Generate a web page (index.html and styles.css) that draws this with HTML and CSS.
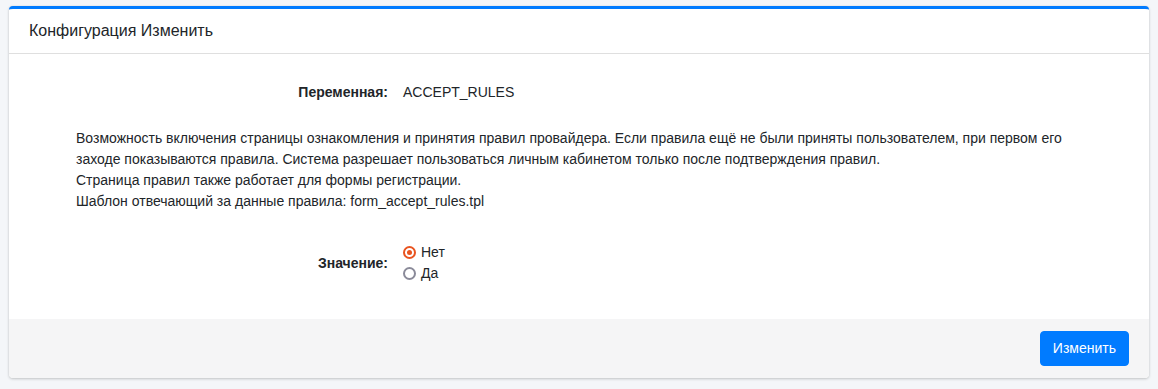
FILE: index.html
```html
<!DOCTYPE html>
<html lang="ru">
<head>
<meta charset="utf-8">
<title>Конфигурация Изменить</title>
<link rel="stylesheet" href="styles.css">
</head>
<body>
<div class="card">
  <div class="card-header">
    <h3 class="card-title">Конфигурация Изменить</h3>
  </div>
  <div class="card-body">
    <div class="form-row var-row">
      <div class="label">Переменная:</div>
      <div class="value">ACCEPT_RULES</div>
    </div>
    <div class="description">
      Возможность включения страницы ознакомления и принятия правил провайдера. Если правила ещё не были приняты пользователем, при первом его заходе показываются правила. Система разрешает пользоваться личным кабинетом только после подтверждения правил.<br>
      Страница правил также работает для формы регистрации.<br>
      Шаблон отвечающий за данные правила: form_accept_rules.tpl
    </div>
    <div class="form-row value-row">
      <div class="label">Значение:</div>
      <div class="radios">
        <label class="radio"><span class="dot checked"></span>Нет</label>
        <label class="radio"><span class="dot"></span>Да</label>
      </div>
    </div>
  </div>
  <div class="card-footer">
    <button class="btn">Изменить</button>
  </div>
</div>
</body>
</html>
```

FILE: styles.css
```css
html, body {
  margin: 0;
  padding: 0;
}
body {
  background: #f4f6f9;
  font-family: "Liberation Sans", Arial, sans-serif;
  font-size: 14px;
  line-height: 21px;
  color: #212529;
  padding: 6px 9px;
}
.card {
  width: 1140px;
  background: #fff;
  border-top: 3px solid #007bff;
  border-radius: 4px;
  box-shadow: 0 0 1px rgba(0,0,0,.125), 0 1px 3px rgba(0,0,0,.2);
  overflow: hidden;
}
.card-header {
  padding: 12px 20px;
  border-bottom: 1px solid #dfdfdf;
}
.card-title {
  margin: 0;
  font-size: 16px;
  line-height: 20px;
  font-weight: 400;
}
.card-body {
  padding: 28px 20px 35px;
}
.form-row {
  display: flex;
  gap: 15px;
}
.label {
  width: 359px;
  text-align: right;
  font-weight: 700;
  flex-shrink: 0;
}
.value-row {
  margin-top: 30px;
  align-items: center;
}
.description {
  margin-top: 25px;
  padding-left: 47px;
  padding-right: 20px;
}
.radios {
  display: flex;
  flex-direction: column;
}
.radio {
  display: flex;
  align-items: center;
  gap: 5px;
}
.dot {
  width: 13px;
  height: 13px;
  box-sizing: border-box;
  border: 2px solid #8a8a99;
  border-radius: 50%;
  position: relative;
}
.dot.checked {
  border-color: #e95420;
}
.dot.checked::after {
  content: "";
  position: absolute;
  left: 2px;
  top: 2px;
  width: 5px;
  height: 5px;
  border-radius: 50%;
  background: #e95420;
}
.card-footer {
  background: #f5f5f6;
  padding: 12px 20px;
  display: flex;
  justify-content: flex-end;
}
.btn {
  font-family: inherit;
  font-size: 14px;
  line-height: 21px;
  padding: 6px 12px;
  border: 1px solid #007bff;
  background: #007bff;
  color: #fff;
  border-radius: 4px;
}
```
